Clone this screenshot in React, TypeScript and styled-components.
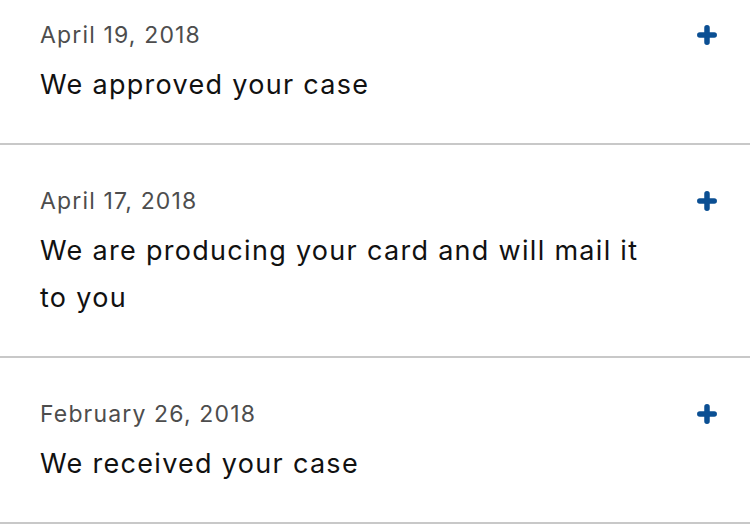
import styled, { createGlobalStyle } from "styled-components";

const GlobalStyle = createGlobalStyle`
  html, body {
    margin: 0;
    padding: 0;
    background: #ffffff;
  }
  body {
    font-family: Inter, Lato, "Open Sans", sans-serif;
    -webkit-font-smoothing: antialiased;
  }
`;

type CaseEvent = {
  date: string;
  text: string;
};

const events: CaseEvent[] = [
  { date: "April 19, 2018", text: "We approved your case" },
  { date: "April 17, 2018", text: "We are producing your card and will mail it to you" },
  { date: "February 26, 2018", text: "We received your case" },
];

export default function App() {
  return (
    <>
      <GlobalStyle />
      <History>
        {events.map((e) => (
          <Row key={e.date}>
            <Body>
              <DateLine>{e.date}</DateLine>
              <Message>{e.text}</Message>
            </Body>
            <ExpandButton type="button" aria-label="Show details">
              <PlusIcon />
            </ExpandButton>
          </Row>
        ))}
      </History>
    </>
  );
}

function PlusIcon() {
  return (
    <svg width="20" height="20" viewBox="0 0 20 20">
      <path
        d="M10 2.8v14.4M2.8 10h14.4"
        stroke="#0b4f93"
        strokeWidth="5.5"
        strokeLinecap="round"
        fill="none"
      />
    </svg>
  );
}

const History = styled.div`
  width: 750px;
  display: flex;
  flex-direction: column;
`;

const Row = styled.div`
  display: flex;
  align-items: flex-start;
  padding: 41px 33px 35px 40px;
  border-bottom: 2px solid #c8c8c8;

  &:first-child {
    padding-top: 20px;
  }
`;

const Body = styled.div`
  flex: 1;
  max-width: 610px;
  margin-right: auto;
`;

const DateLine = styled.div`
  font-size: 23px;
  line-height: 30px;
  letter-spacing: 1.15px;
  color: #4d4d4d;
  margin-bottom: 11px;
`;

const Message = styled.div`
  font-size: 27px;
  line-height: 47px;
  letter-spacing: 1.3px;
  color: #111111;
`;

const ExpandButton = styled.button`
  border: 0;
  background: none;
  padding: 0;
  margin-top: 5px;
  width: 20px;
  height: 20px;
  display: flex;
  cursor: pointer;
`;
